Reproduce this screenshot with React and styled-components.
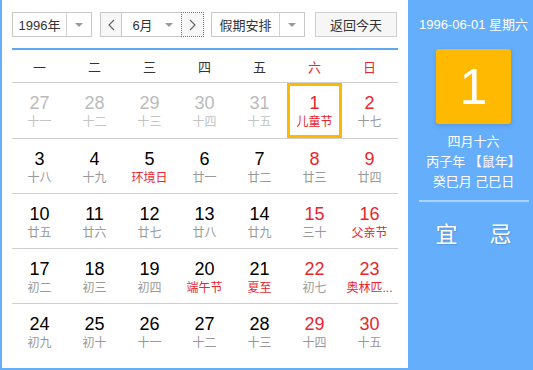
import React from "react";
import styled, { createGlobalStyle } from "styled-components";

const GlobalStyle = createGlobalStyle`
    html, body {
        margin: 0;
        padding: 0;
        background: #fff;
    }
    body {
        font-family: "Liberation Sans", Arial, "Noto Sans CJK SC", sans-serif;
    }
`;

const BLUE = "#65aefc";
const RED = "#e8262e";

const Frame = styled.div`
    display: flex;
    width: 533px;
    height: 370px;
    box-sizing: border-box;
    border-left: 2px solid ${BLUE};
    border-bottom: 2px solid ${BLUE};
`;

const LeftPart = styled.div`
    width: 406px;
    box-sizing: border-box;
    padding: 12px 10px 0 10px;
    background: #fff;
`;

const Toolbar = styled.div`
    display: flex;
    height: 25px;
    align-items: stretch;
`;

const Select = styled.div`
    display: flex;
    width: ${(p) => p.width}px;
    margin-right: ${(p) => p.gap || 0}px;
    box-sizing: border-box;
    border: 1px solid #c8c8c8;
    background: #fff;
    font-size: 13px;
    color: #333;
`;

const SelectText = styled.div`
    flex: 1;
    display: flex;
    align-items: center;
    justify-content: center;
`;

const SelectArrow = styled.div`
    width: 24px;
    display: flex;
    align-items: center;
    justify-content: center;
    border-left: ${(p) => (p.plain ? "none" : "1px solid #d4d4d4")};

    &::after {
        content: "";
        border-left: 4px solid transparent;
        border-right: 4px solid transparent;
        border-top: 4px solid #999;
    }
`;

const MonthGroup = styled.div`
    display: flex;
    margin-right: 7px;
`;

const NavButton = styled.div`
    width: ${(p) => p.width}px;
    box-sizing: border-box;
    display: flex;
    align-items: center;
    justify-content: center;
    background: #f7f7f7;
    border: ${(p) => (p.focused ? "1px dotted #777" : "1px solid #c8c8c8")};
    color: #666;
`;

const MonthSelect = styled.div`
    display: flex;
    width: 59px;
    box-sizing: border-box;
    border-top: 1px solid #c8c8c8;
    border-bottom: 1px solid #c8c8c8;
    font-size: 13px;
    color: #333;
    padding-left: 6px;
`;

const TodayButton = styled.div`
    width: 82px;
    box-sizing: border-box;
    display: flex;
    align-items: center;
    justify-content: center;
    border: 1px solid #d0d0d0;
    background: #f6f6f6;
    font-size: 13px;
    color: #333;
`;

const BlueRule = styled.div`
    height: 2px;
    margin-top: 11px;
    background: #5ea8f4;
`;

const WeekHead = styled.div`
    display: grid;
    grid-template-columns: repeat(7, 55px);
    height: 32px;
    align-items: center;
    border-bottom: 1px solid #cfcfcf;
`;

const WeekDay = styled.div`
    text-align: center;
    font-size: 13px;
    color: ${(p) => (p.weekend ? RED : "#333")};
`;

const WeekRow = styled.div`
    display: grid;
    grid-template-columns: repeat(7, 55px);
    height: 55px;
    box-sizing: border-box;
    border-top: ${(p) => (p.first ? "none" : "1px solid #cfcfcf")};
`;

const Cell = styled.div`
    display: flex;
    flex-direction: column;
    align-items: center;
    justify-content: center;
    box-sizing: border-box;
    padding-top: 2px;
    border: 3px solid ${(p) => (p.selected ? "#fbb900" : "transparent")};
`;

const DayNum = styled.div`
    font-size: 18px;
    line-height: 20px;
    color: ${(p) => (p.muted ? "#bbb" : p.red ? RED : "#000")};
`;

const Lunar = styled.div`
    font-size: 12px;
    line-height: 16px;
    margin-top: 1px;
    color: ${(p) => (p.muted ? "#c4c4c4" : p.festival ? RED : "#999")};
    white-space: nowrap;
`;

const RightPart = styled.div`
    flex: 1;
    background: ${BLUE};
    display: flex;
    flex-direction: column;
    align-items: center;
    color: #fff;
    padding: 16px 0 0 6px;
`;

const DateLine = styled.div`
    font-size: 13px;
    line-height: 18px;
`;

const BigDay = styled.div`
    width: 75px;
    height: 75px;
    margin-top: 15px;
    border-radius: 3px;
    background: #ffb900;
    display: flex;
    align-items: center;
    justify-content: center;
    font-size: 50px;
    box-shadow: 0 2px 4px rgba(40, 90, 160, 0.25);
`;

const LunarInfo = styled.div`
    margin-top: 8px;
    font-size: 13px;
    line-height: 20px;
    text-align: center;
`;

const Divider = styled.div`
    width: 110px;
    height: 2px;
    margin-top: 8px;
    background: rgba(255, 255, 255, 0.45);
`;

const YiJi = styled.div`
    display: flex;
    gap: 32px;
    margin-top: 14px;
    font-size: 22px;
    text-shadow: 1px 1px 1px rgba(0, 0, 0, 0.15);
`;

const weekNames = ["一", "二", "三", "四", "五", "六", "日"];

const weeks = [
    [
        ["27", "十一", "m"], ["28", "十二", "m"], ["29", "十三", "m"], ["30", "十四", "m"],
        ["31", "十五", "m"], ["1", "儿童节", "fs"], ["2", "十七", ""],
    ],
    [
        ["3", "十八", ""], ["4", "十九", ""], ["5", "环境日", "f"], ["6", "廿一", ""],
        ["7", "廿二", ""], ["8", "廿三", ""], ["9", "廿四", ""],
    ],
    [
        ["10", "廿五", ""], ["11", "廿六", ""], ["12", "廿七", ""], ["13", "廿八", ""],
        ["14", "廿九", ""], ["15", "三十", ""], ["16", "父亲节", "f"],
    ],
    [
        ["17", "初二", ""], ["18", "初三", ""], ["19", "初四", ""], ["20", "端午节", "f"],
        ["21", "夏至", "f"], ["22", "初七", ""], ["23", "奥林匹...", "f"],
    ],
    [
        ["24", "初九", ""], ["25", "初十", ""], ["26", "十一", ""], ["27", "十二", ""],
        ["28", "十三", ""], ["29", "十四", ""], ["30", "十五", ""],
    ],
];

export default function App() {
    return (
        <>
            <GlobalStyle />
            <Frame>
                <LeftPart>
                    <Toolbar>
                        <Select width={80} gap={8}>
                            <SelectText>1996年</SelectText>
                            <SelectArrow />
                        </Select>
                        <MonthGroup>
                            <NavButton width={22}>
                                <svg width="7" height="12" viewBox="0 0 7 12">
                                    <path d="M6 1L1 6l5 5" fill="none" stroke="#666" strokeWidth="1.2" />
                                </svg>
                            </NavButton>
                            <MonthSelect>
                                <SelectText>6月</SelectText>
                                <SelectArrow plain />
                            </MonthSelect>
                            <NavButton width={23} focused>
                                <svg width="7" height="12" viewBox="0 0 7 12">
                                    <path d="M1 1l5 5-5 5" fill="none" stroke="#666" strokeWidth="1.2" />
                                </svg>
                            </NavButton>
                        </MonthGroup>
                        <Select width={94} gap={10}>
                            <SelectText>假期安排</SelectText>
                            <SelectArrow />
                        </Select>
                        <TodayButton>返回今天</TodayButton>
                    </Toolbar>
                    <BlueRule />
                    <WeekHead>
                        {weekNames.map((w, i) => (
                            <WeekDay key={w} weekend={i >= 5}>{w}</WeekDay>
                        ))}
                    </WeekHead>
                    {weeks.map((row, r) => (
                        <WeekRow key={r} first={r === 0}>
                            {row.map(([num, lunar, flag], c) => {
                                const muted = flag.includes("m");
                                return (
                                    <Cell key={c} selected={flag.includes("s")}>
                                        <DayNum muted={muted} red={c >= 5}>{num}</DayNum>
                                        <Lunar muted={muted} festival={flag.includes("f")}>{lunar}</Lunar>
                                    </Cell>
                                );
                            })}
                        </WeekRow>
                    ))}
                </LeftPart>
                <RightPart>
                    <DateLine>1996-06-01 星期六</DateLine>
                    <BigDay>1</BigDay>
                    <LunarInfo>
                        <div>四月十六</div>
                        <div>丙子年 【鼠年】</div>
                        <div>癸巳月 己巳日</div>
                    </LunarInfo>
                    <Divider />
                    <YiJi>
                        <span>宜</span>
                        <span>忌</span>
                    </YiJi>
                </RightPart>
            </Frame>
        </>
    );
}
